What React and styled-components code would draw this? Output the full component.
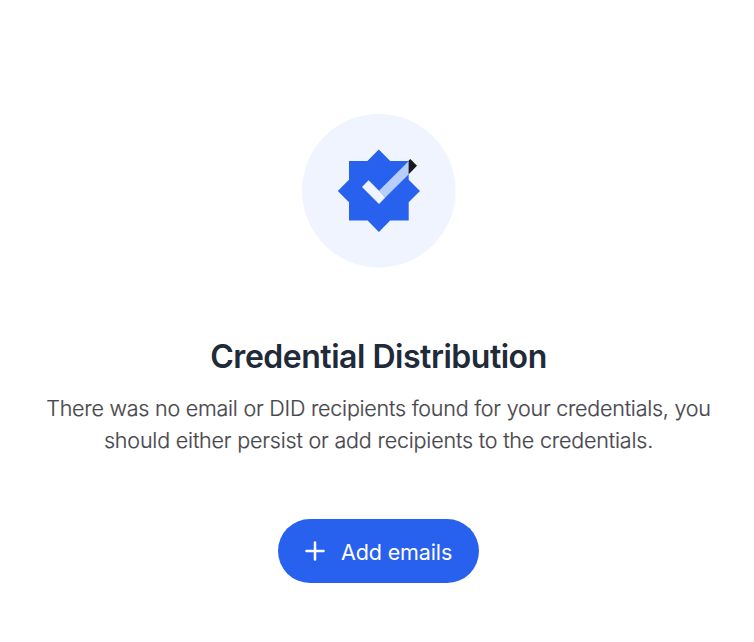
import React from "react";
import styled, { createGlobalStyle } from "styled-components";

const GlobalStyle = createGlobalStyle`
  *, *::before, *::after { box-sizing: border-box; }
  body { margin: 0; background: #fff; }
`;

const EmptyState = styled.main`
  display: flex;
  flex-direction: column;
  align-items: center;
  width: 754px;
  height: 642px;
  padding: 113px 0 0 3px;
  overflow: hidden;
  font-family: Inter, sans-serif;
`;

const Emblem = styled.svg`
  display: block;
  flex: none;
  width: 155px;
  height: 155px;
`;

const Title = styled.h1`
  margin: 68px 0 0;
  color: #202a39;
  font-size: 32px;
  font-weight: 600;
  line-height: 42px;
  letter-spacing: -0.48px;
  white-space: nowrap;
`;

const Description = styled.p`
  margin: 14px 0 0;
  color: #47474c;
  font-size: 21.5px;
  font-weight: 300;
  line-height: 32px;
  text-align: center;
  -webkit-text-stroke: 0.2px #47474c;
`;

const Line = styled.span`
  display: block;
  white-space: nowrap;
  letter-spacing: ${(p) => p.$spacing}px;
`;

const Button = styled.button`
  display: flex;
  align-items: center;
  gap: 16px;
  width: 201px;
  height: 64px;
  margin: 63px 0 0;
  padding: 0 0 0 27px;
  border: 0;
  border-radius: 32px;
  background: #2961ef;
  color: #fff;
  font: 400 21.5px/32px Inter, sans-serif;
  letter-spacing: -0.13px;
  white-space: nowrap;
  cursor: pointer;
`;

const ButtonLabel = styled.span`
  padding-top: 2px;
`;

const PlusIcon = styled.svg`
  display: block;
  flex: none;
  width: 20px;
  height: 20px;
`;

export default function App() {
  return (
    <>
      <GlobalStyle />
      <EmptyState>
        <Emblem viewBox="301 113 155 155" aria-hidden="true">
          <circle cx="378.8" cy="190.7" r="76.8" fill="#eff4ff" />
          <path
            fill="#2961ef"
            d="M378.8 149.5 390.2 161H408.7V179.7L420 190.9 408.7 202.2V220.6H390.2L378.9 232 367.6 220.6H349V202.2L337.8 190.9 349 179.7V161H367.4Z"
          />
          <path fill="#b7cdfb" d="M379 190.8 408.8 161V174.3L385.3 197.6Z" />
          <path fill="#eff4ff" d="M368.6 180.3 379 190.8 385.3 197.6 379 204 362 187Z" />
          <path fill="#18191d" d="M408.7 160.6 410.3 159 417 165.8 408.7 174.3Z" />
        </Emblem>
        <Title>Credential Distribution</Title>
        <Description>
          <Line $spacing={-0.235}>There was no email or DID recipients found for your credentials, you</Line>
          <Line $spacing={-0.19}>should either persist or add recipients to the credentials.</Line>
        </Description>
        <Button type="button">
          <PlusIcon viewBox="0 0 20 20" aria-hidden="true">
            <path d="M10 1.5V18.5M1.5 10H18.5" stroke="#fff" strokeWidth="2.5" strokeLinecap="round" />
          </PlusIcon>
          <ButtonLabel>Add emails</ButtonLabel>
        </Button>
      </EmptyState>
    </>
  );
}
